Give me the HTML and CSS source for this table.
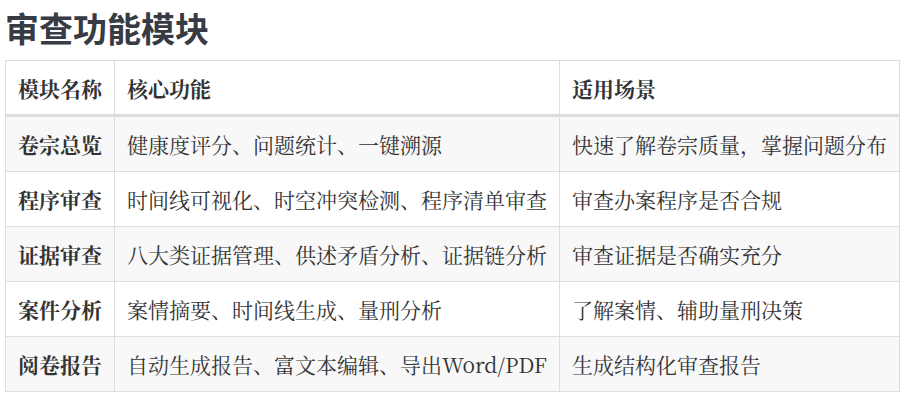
FILE: index.html
```html
<!DOCTYPE html>
<html lang="zh-CN">
<head>
<meta charset="utf-8">
<title>审查功能模块</title>
<link rel="stylesheet" href="styles.css">
</head>
<body>
<main class="doc">
  <h2 class="doc-title">审查功能模块</h2>
  <table class="modules">
    <thead>
      <tr><th>模块名称</th><th>核心功能</th><th>适用场景</th></tr>
    </thead>
    <tbody>
      <tr><td class="name">卷宗总览</td><td>健康度评分、问题统计、一键溯源</td><td>快速了解卷宗质量，掌握问题分布</td></tr>
      <tr><td class="name">程序审查</td><td>时间线可视化、时空冲突检测、程序清单审查</td><td>审查办案程序是否合规</td></tr>
      <tr><td class="name">证据审查</td><td>八大类证据管理、供述矛盾分析、证据链分析</td><td>审查证据是否确实充分</td></tr>
      <tr><td class="name">案件分析</td><td>案情摘要、时间线生成、量刑分析</td><td>了解案情、辅助量刑决策</td></tr>
      <tr><td class="name">阅卷报告</td><td>自动生成报告、富文本编辑、导出Word/PDF</td><td>生成结构化审查报告</td></tr>
    </tbody>
  </table>
</main>
</body>
</html>
```

FILE: styles.css
```css
html, body {
  margin: 0;
  padding: 0;
  background: #ffffff;
}

.doc {
  padding: 0 5px;
}

.doc-title {
  margin: 0;
  padding-top: 6px;
  font-family: "Noto Sans CJK SC", "Noto Sans", sans-serif;
  font-size: 34px;
  font-weight: 700;
  line-height: 44px;
  color: #373b44;
  height: 54px;
}

.modules {
  border-collapse: collapse;
  font-family: "Noto Serif CJK SC", "DejaVu Serif", serif;
  font-size: 21px;
  color: #333333;
}

.modules th,
.modules td {
  border: 1px solid #dddddd;
  padding: 11px 12px;
  line-height: 32px;
  text-align: left;
  white-space: nowrap;
}

.modules th {
  font-weight: 700;
  background: #ffffff;
}

.modules thead th {
  border-bottom: 3px solid #dddddd;
  padding-bottom: 10px;
}

.modules td.name {
  font-weight: 700;
}

.modules tbody tr:nth-child(odd) {
  background: #f8f8f8;
}
```
